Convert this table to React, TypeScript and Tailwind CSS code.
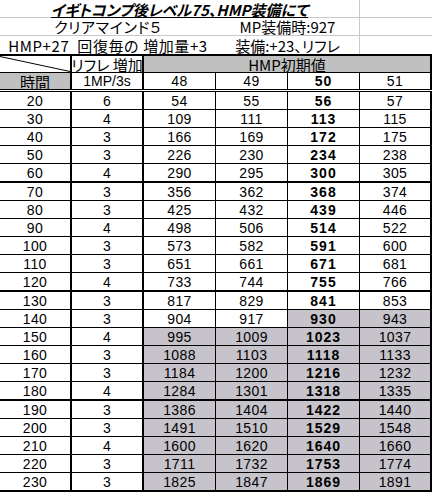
import React from "react";

const rows: number[][] = [
  [20, 6, 54, 55, 56, 57],
  [30, 4, 109, 111, 113, 115],
  [40, 3, 166, 169, 172, 175],
  [50, 3, 226, 230, 234, 238],
  [60, 4, 290, 295, 300, 305],
  [70, 3, 356, 362, 368, 374],
  [80, 3, 425, 432, 439, 446],
  [90, 4, 498, 506, 514, 522],
  [100, 3, 573, 582, 591, 600],
  [110, 3, 651, 661, 671, 681],
  [120, 4, 733, 744, 755, 766],
  [130, 3, 817, 829, 841, 853],
  [140, 3, 904, 917, 930, 943],
  [150, 4, 995, 1009, 1023, 1037],
  [160, 3, 1088, 1103, 1118, 1133],
  [170, 3, 1184, 1200, 1216, 1232],
  [180, 4, 1284, 1301, 1318, 1335],
  [190, 3, 1386, 1404, 1422, 1440],
  [200, 3, 1491, 1510, 1529, 1548],
  [210, 4, 1600, 1620, 1640, 1660],
  [220, 3, 1711, 1732, 1753, 1774],
  [230, 3, 1825, 1847, 1869, 1891],
];

const thickAfter = new Set([60, 120, 180, 230]);

function shaded(t: number, col: number) {
  if (t >= 150) return true;
  if (t === 140 && col >= 4) return true;
  return false;
}

const jp = "font-['Noto_Sans_CJK_JP',sans-serif] [font-feature-settings:'palt']";
const num = "font-['Liberation_Sans',Arial,sans-serif]";

export default function App() {
  return (
    <div className="w-[432px] h-[494px] bg-white text-black overflow-hidden">
      {/* Row 1: title */}
      <div className="flex h-[18px] border-b border-[#c8c8c8]">
        <div className={`w-[360px] border-r border-[#c8c8c8] flex items-center justify-center ${jp} text-[15px] font-bold italic underline leading-none pt-[1px]`}>
          イギトコンプ後レベル75、HMP装備にて
        </div>
        <div className="w-[72px]" />
      </div>
      {/* Row 2 */}
      <div className="flex h-[18px] border-b border-[#c8c8c8]">
        <div className={`w-[216px] flex items-center justify-center ${jp} text-[15px] tracking-[0.6px] leading-none`}>
          クリアマインド５
        </div>
        <div className={`w-[144px] border-r border-[#c8c8c8] flex items-center justify-center ${jp} text-[15px] leading-none`}>
          MP装備時:927
        </div>
        <div className="w-[72px]" />
      </div>
      {/* Row 3 */}
      <div className="flex h-[20px] border-b-2 border-black">
        <div className={`w-[216px] flex items-center justify-center ${jp} text-[15px] tracking-[0.6px] leading-none whitespace-pre`}>
          HMP+27  回復毎の 増加量+3
        </div>
        <div className={`w-[144px] border-r border-[#c8c8c8] flex items-center justify-center ${jp} text-[15px] leading-none`}>
          装備:+23、リフレ
        </div>
        <div className="w-[72px]" />
      </div>
      {/* Row 4 header */}
      <div className="flex h-[17px] border-b border-black">
        <div className="relative w-[72px] border-r-2 border-black">
          <svg className="absolute inset-0" width="70" height="16" viewBox="0 0 70 16">
            <line x1="0" y1="0.5" x2="70" y2="15.5" stroke="black" strokeWidth="1" />
          </svg>
        </div>
        <div className={`w-[72px] border-r-2 border-black flex items-center justify-center ${jp} text-[15px] leading-none whitespace-pre`}>
          リフレ 増加
        </div>
        <div className={`w-[288px] bg-[#c0c0c0] border-r-2 border-black flex items-center justify-center ${jp} text-[15px] leading-none`}>
          HMP初期値
        </div>
      </div>
      {/* Row 5 header */}
      <div className="flex h-[19px] border-b-[3px] border-double border-black">
        <div className={`w-[72px] bg-[#c0c0c0] border-r-2 border-black flex items-center justify-center ${jp} text-[15px] leading-none`}>
          時間
        </div>
        <div className={`w-[72px] border-r-2 border-black flex items-center justify-center ${num} text-[14px] leading-none`}>
          1MP/3s
        </div>
        <div className={`w-[72px] border-r border-black flex items-center justify-center ${num} text-[14px] tracking-[0.4px] leading-none`}>
          48
        </div>
        <div className={`w-[72px] border-r border-black flex items-center justify-center ${num} text-[14px] tracking-[0.4px] leading-none`}>
          49
        </div>
        <div className={`w-[72px] border-r border-black flex items-center justify-center ${num} text-[14px] font-bold tracking-[1px] leading-none`}>
          50
        </div>
        <div className={`w-[72px] border-r-2 border-black flex items-center justify-center ${num} text-[14px] tracking-[0.4px] leading-none`}>
          51
        </div>
      </div>
      {/* Data rows */}
      {rows.map((r) => {
        const thick = thickAfter.has(r[0]);
        return (
          <div
            key={r[0]}
            className={`flex border-black ${thick ? "h-[19px] border-b-2" : "h-[18px] border-b"}`}
          >
            {r.map((v, i) => {
              const borderR = i === 0 || i === 1 || i === 5 ? "border-r-2" : "border-r";
              const bg = i >= 2 && shaded(r[0], i) ? "bg-[#c6c3ca]" : "bg-white";
              const bold = i === 4 ? "font-bold tracking-[1px]" : "tracking-[0.4px]";
              return (
                <div
                  key={i}
                  className={`w-[72px] ${borderR} border-black ${bg} flex items-center justify-center ${num} text-[14px] leading-none ${bold}`}
                >
                  {v}
                </div>
              );
            })}
          </div>
        );
      })}
    </div>
  );
}
